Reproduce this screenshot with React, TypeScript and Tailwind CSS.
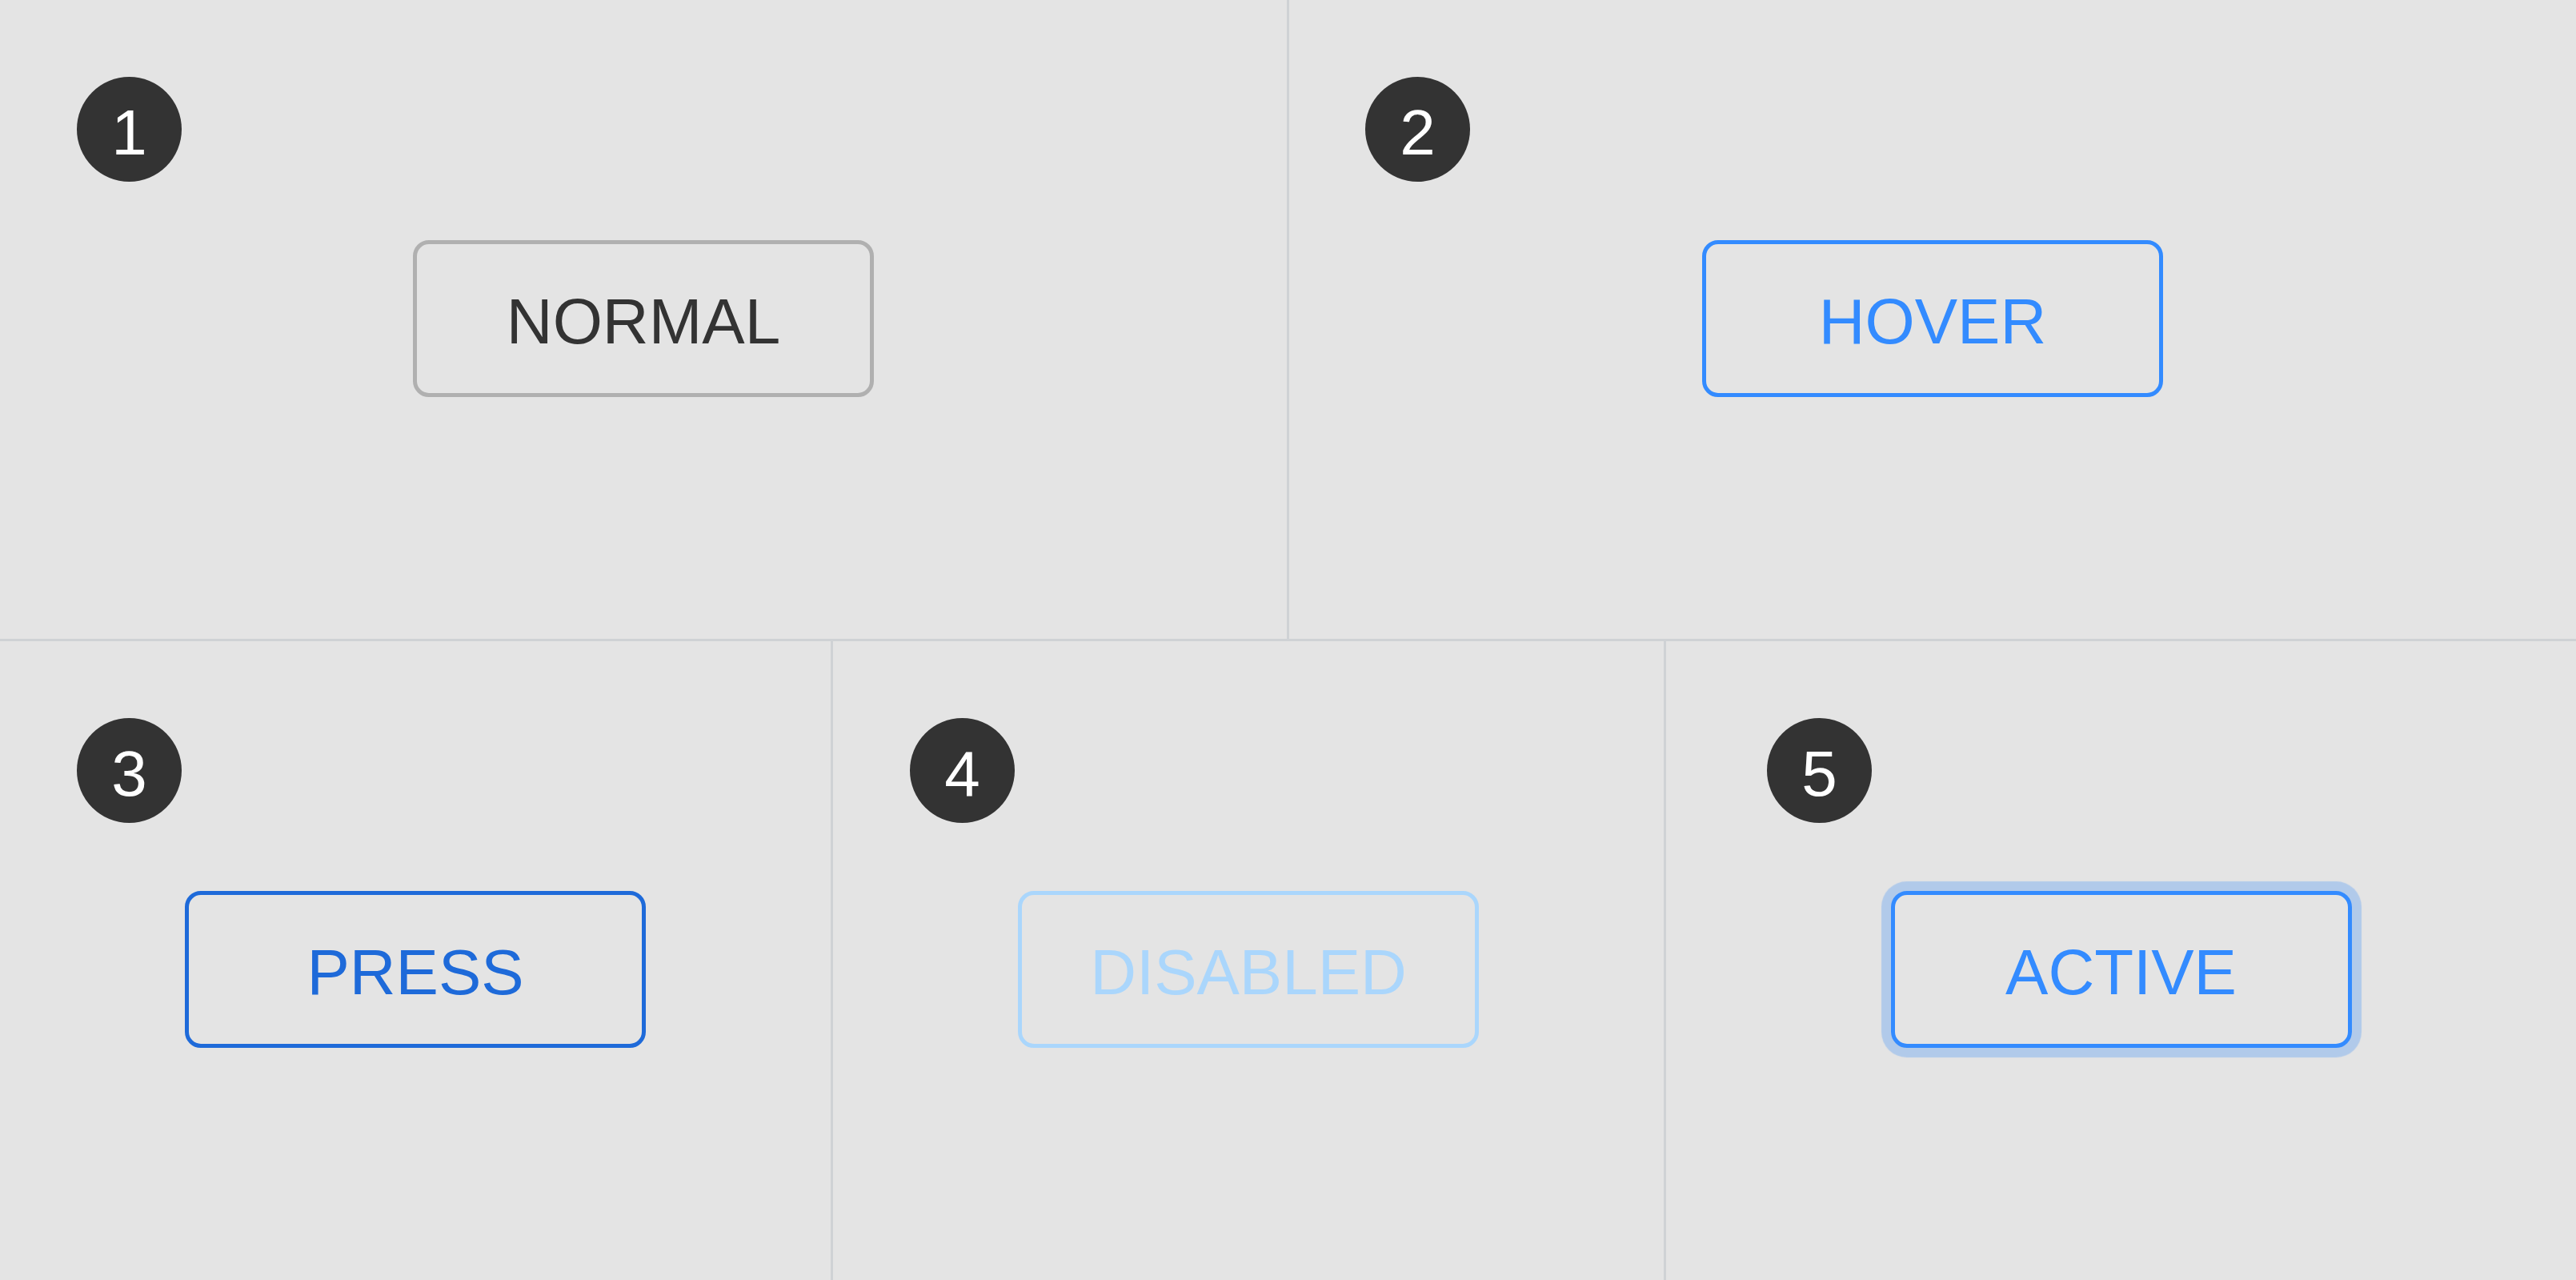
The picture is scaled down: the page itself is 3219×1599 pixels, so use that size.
import React from "react";
import clsx from "clsx";

type Variant = "normal" | "hover" | "press" | "disabled" | "active";

const buttonStyles: Record<Variant, string> = {
  normal: "border-[#b0b0b0] text-[#333333]",
  hover: "border-[#338bff] text-[#338bff]",
  press: "border-[#1e6ad9] text-[#1e6ad9]",
  disabled: "border-[#aad6fc] text-[#aad6fc]",
  active:
    "border-[#338bff] text-[#338bff] shadow-[0_0_1px_12px_#b1caea]",
};

function Badge({ n }: { n: number }) {
  return (
    <div className="flex h-[131px] w-[131px] items-center justify-center rounded-full bg-[#333333] pt-[8px] text-[80px] leading-none text-white">
      {n}
    </div>
  );
}

function StateButton({ label, variant }: { label: string; variant: Variant }) {
  return (
    <button
      disabled={variant === "disabled"}
      className={clsx(
        "flex h-[196px] w-[576px] items-center justify-center rounded-[20px] border-[5px] bg-transparent pt-[7px] text-[80px] leading-none",
        buttonStyles[variant]
      )}
    >
      {label}
    </button>
  );
}

function Panel({
  n,
  label,
  variant,
  className,
  badgeClass,
  buttonGap,
}: {
  n: number;
  label: string;
  variant: Variant;
  className?: string;
  badgeClass?: string;
  buttonGap: string;
}) {
  return (
    <div className={clsx("flex flex-col pt-[96px]", className)}>
      <div className={clsx("self-start", badgeClass)}>
        <Badge n={n} />
      </div>
      <div className={clsx("flex justify-center", buttonGap)}>
        <StateButton label={label} variant={variant} />
      </div>
    </div>
  );
}

export default function App() {
  return (
    <div
      className="flex h-[1599px] w-full flex-col overflow-hidden bg-[#e4e4e4]"
      style={{ fontFamily: '"Liberation Sans", Arial, sans-serif' }}
    >
      <div className="flex h-[801px] border-b-[3px] border-[#cfd2d5]">
        <Panel
          n={1}
          label="NORMAL"
          variant="normal"
          className="w-[1611px] border-r-[3px] border-[#cfd2d5]"
          badgeClass="ml-[96px]"
          buttonGap="mt-[73px]"
        />
        <Panel
          n={2}
          label="HOVER"
          variant="hover"
          className="flex-1"
          badgeClass="ml-[95px]"
          buttonGap="mt-[73px]"
        />
      </div>
      <div className="flex flex-1">
        <Panel
          n={3}
          label="PRESS"
          variant="press"
          className="w-[1041px] border-r-[3px] border-[#cfd2d5]"
          badgeClass="ml-[96px]"
          buttonGap="mt-[85px]"
        />
        <Panel
          n={4}
          label="DISABLED"
          variant="disabled"
          className="w-[1041px] border-r-[3px] border-[#cfd2d5]"
          badgeClass="ml-[96px]"
          buttonGap="mt-[85px]"
        />
        <Panel
          n={5}
          label="ACTIVE"
          variant="active"
          className="flex-1"
          badgeClass="ml-[126px]"
          buttonGap="mt-[85px]"
        />
      </div>
    </div>
  );
}
